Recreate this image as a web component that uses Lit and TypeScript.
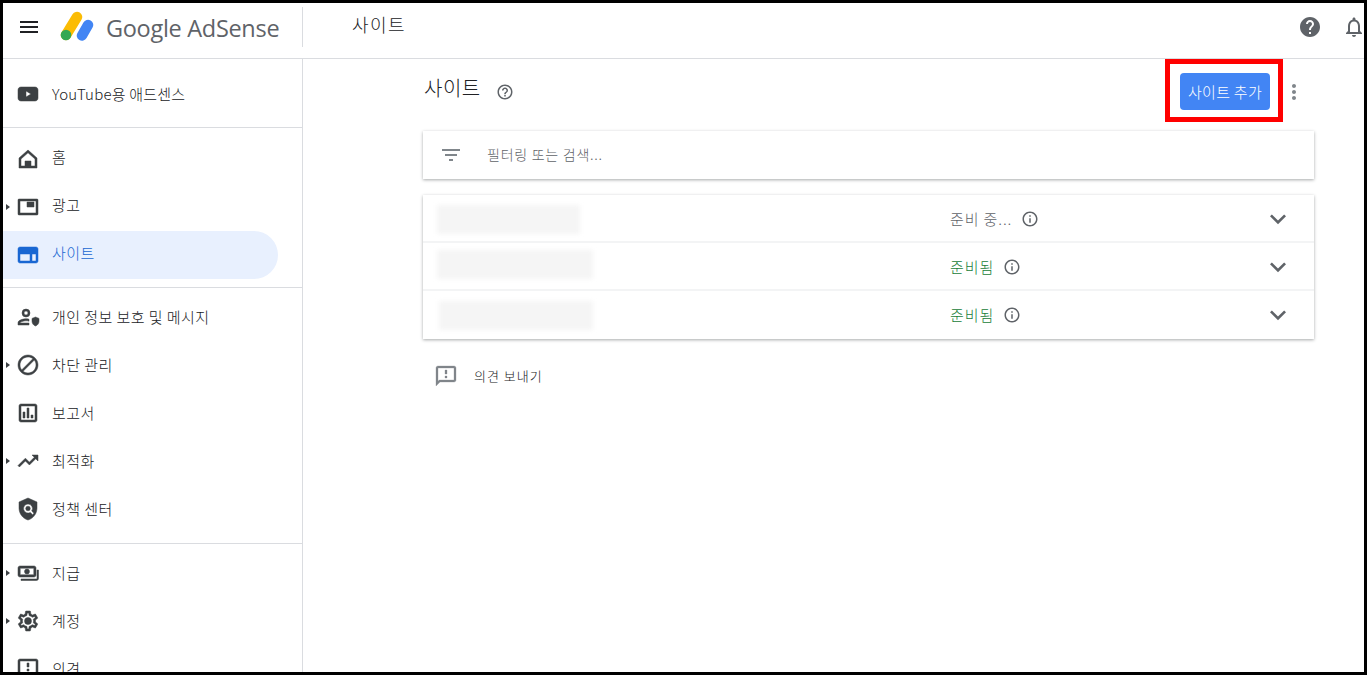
import { css, html, LitElement } from 'lit';
import { customElement } from 'lit/decorators.js';

const ICONS = {
  menu: 'M3 18h18v-2H3v2zm0-5h18v-2H3v2zm0-7v2h18V6H3z',
  help: 'M12 2C6.48 2 2 6.48 2 12s4.48 10 10 10 10-4.48 10-10S17.52 2 12 2zm1 17h-2v-2h2v2zm2.07-7.75l-.9.92C13.45 12.9 13 13.5 13 15h-2v-.5c0-1.1.45-2.1 1.17-2.83l1.24-1.26c.37-.36.59-.86.59-1.41 0-1.1-.9-2-2-2s-2 .9-2 2H8c0-2.21 1.79-4 4-4s4 1.79 4 4c0 .88-.36 1.68-.93 2.25z',
  helpOutline: 'M11 18h2v-2h-2v2zm1-16C6.48 2 2 6.48 2 12s4.48 10 10 10 10-4.48 10-10S17.52 2 12 2zm0 18c-4.41 0-8-3.59-8-8s3.59-8 8-8 8 3.59 8 8-3.59 8-8 8zm0-14c-2.21 0-4 1.79-4 4h2c0-1.1.9-2 2-2s2 .9 2 2c0 2-3 1.75-3 5h2c0-2.25 3-2.5 3-5 0-2.21-1.79-4-4-4z',
  bell: 'M12 22c1.1 0 2-.9 2-2h-4c0 1.1.9 2 2 2zm6-6v-5c0-3.07-1.63-5.64-4.5-6.32V4c0-.83-.67-1.5-1.5-1.5s-1.5.67-1.5 1.5v.68C7.64 5.36 6 7.92 6 11v5l-2 2v1h16v-1l-2-2zm-2 1H8v-6c0-2.48 1.51-4.5 4-4.5s4 2.02 4 4.5v6z',
  youtube: 'M5 5h14c1.7 0 3 1.3 3 3v8c0 1.7-1.3 3-3 3H5c-1.7 0-3-1.3-3-3V8c0-1.7 1.3-3 3-3zm5 4v6l5-3-5-3z',
  home: 'M12 3L3 11v10h18V11l-9-8zm0 2.8l7 6.2v7h-4v-5H9v5H5v-7l7-6.2z',
  ads: 'M21 4H3c-.6 0-1 .4-1 1v14c0 .6.4 1 1 1h18c.6 0 1-.4 1-1V5c0-.6-.4-1-1-1zm-1 14H4V6h16v12zM11 7h7v5h-7z',
  sites: 'M20 4H4c-1.1 0-2 .9-2 2v12c0 1.1.9 2 2 2h16c1.1 0 2-.9 2-2V6c0-1.1-.9-2-2-2zM4 11h10v7H4v-7zm12 0h4v7h-4v-7z',
  privacy: 'M10 4a4 4 0 1 1 0 8 4 4 0 0 1 0-8zm0 2a2 2 0 1 0 0 4 2 2 0 0 0 0-4zM2 20v-2.2c0-2.6 5.2-4 8-4 1 0 2 .1 3 .4v2c-1-.3-2-.4-3-.4-2.6 0-5.7 1.2-6 2.2h9v2H2zm17.5-8l3.5 1.4v2.8c0 2.2-1.5 4.2-3.5 4.8-2-.6-3.5-2.6-3.5-4.8v-2.8l3.5-1.4z',
  block: 'M12 2C6.48 2 2 6.48 2 12s4.48 10 10 10 10-4.48 10-10S17.52 2 12 2zM4 12c0-4.42 3.58-8 8-8 1.85 0 3.55.63 4.9 1.69L5.69 16.9C4.63 15.55 4 13.85 4 12zm8 8c-1.85 0-3.55-.63-4.9-1.69L18.31 7.1C19.37 8.45 20 10.15 20 12c0 4.42-3.58 8-8 8z',
  reports: 'M19 3H5c-1.1 0-2 .9-2 2v14c0 1.1.9 2 2 2h14c1.1 0 2-.9 2-2V5c0-1.1-.9-2-2-2zm0 16H5V5h14v14zM7 11h2v6H7zm4-4h2v10h-2zm4 7h2v3h-2z',
  trending: 'M16 6l2.29 2.29-4.88 4.88-4-4L2 16.59 3.41 18l6-6 4 4 6.3-6.29L22 12V6z',
  policy: 'M12 1L3 5v6c0 5.55 3.84 10.74 9 12 5.16-1.26 9-6.45 9-12V5l-9-4zm0 6a4.5 4.5 0 0 1 3.7 7l2.3 2.3-1.4 1.4-2.3-2.3A4.5 4.5 0 1 1 12 7zm0 2.2a2.3 2.3 0 1 0 0 4.6 2.3 2.3 0 0 0 0-4.6z',
  payments: 'M4 5h14c1.1 0 2 .9 2 2v7c0 1.1-.9 2-2 2H4c-1.1 0-2-.9-2-2V7c0-1.1.9-2 2-2zm.3 2.2c-.1 0-.1 0-.1.1v6.4c0 .1 0 .1.1.1h13.4c.1 0 .1 0 .1-.1V7.300c0-.1 0-.1-.1-.1H4.300zM11 8a2.500 2.500 0 1 1 0 5 2.500 2.500 0 0 1 0-5zM22.500 9v8.500c0 1.100-.9 2-2 2H5V18h16V9h1.500z',
  settings: 'M19.43 12.98c.04-.32.07-.64.07-.98s-.03-.66-.07-.98l2.11-1.65c.19-.15.24-.42.12-.64l-2-3.46c-.12-.22-.39-.3-.61-.22l-2.49 1c-.52-.4-1.08-.73-1.69-.98l-.38-2.65C14.46 2.18 14.25 2 14 2h-4c-.25 0-.46.18-.49.42l-.38 2.65c-.61.25-1.17.59-1.69.98l-2.49-1c-.23-.09-.49 0-.61.22l-2 3.46c-.13.22-.07.49.12.64l2.11 1.65c-.04.32-.07.65-.07.98s.03.66.07.98l-2.11 1.65c-.19.15-.24.42-.12.64l2 3.46c.12.22.39.3.61.22l2.49-1c.52.4 1.08.73 1.69.98l.38 2.65c.03.24.24.42.49.42h4c.25 0 .46-.18.49-.42l.38-2.65c.61-.25 1.17-.59 1.69-.98l2.49 1c.23.09.49 0 .61-.22l2-3.46c.12-.22.07-.49-.12-.64l-2.11-1.65zm-1.98-1.71c.04.31.05.52.05.73 0 .21-.02.43-.05.73l-.14 1.13.89.7 1.08.84-.7 1.21-1.27-.51-1.04-.42-.9.68c-.43.32-.84.56-1.25.73l-1.06.43-.16 1.13-.2 1.35h-1.4l-.19-1.35-.16-1.13-1.06-.43c-.43-.18-.83-.41-1.23-.71l-.91-.7-1.06.43-1.27.51-.7-1.21 1.08-.84.89-.7-.14-1.13c-.03-.31-.05-.54-.05-.74s.02-.43.05-.73l.14-1.13-.89-.7-1.08-.84.7-1.21 1.27.51 1.04.42.9-.68c.43-.32.84-.56 1.25-.73l1.06-.43.16-1.13.2-1.35h1.39l.19 1.35.16 1.13 1.06.43c.43.18.83.41 1.23.71l.91.7 1.06-.43 1.27-.51.7 1.21-1.07.85-.89.7.14 1.13zM12 8.500a3.500 3.500 0 1 0 0 7 3.500 3.500 0 0 0 0-7z',
  feedback: 'M20 2H4c-1.1 0-1.99.9-1.99 2L2 22l4-4h14c1.1 0 2-.9 2-2V4c0-1.1-.9-2-2-2zm0 14H5.17L4 17.17V4h16v12zM11 12h2v2h-2zm0-6h2v4h-2z',
  info: 'M11 7h2v2h-2zm0 4h2v6h-2zm1-9C6.48 2 2 6.48 2 12s4.48 10 10 10 10-4.48 10-10S17.52 2 12 2zm0 18c-4.41 0-8-3.59-8-8s3.59-8 8-8 8 3.59 8 8-3.59 8-8 8z',
  filter: 'M10 18h4v-2h-4v2zM3 6v2h18V6H3zm3 7h12v-2H6v2z',
  chevron: 'M7.41 8.59 12 13.17l4.59-4.58L18 10l-6 6-6-6z',
  more: 'M12 8c1.1 0 2-.9 2-2s-.9-2-2-2-2 .9-2 2 .9 2 2 2zm0 2c-1.1 0-2 .9-2 2s.9 2 2 2 2-.9 2-2-.9-2-2-2zm0 6c-1.1 0-2 .9-2 2s.9 2 2 2 2-.9 2-2-.9-2-2-2z',
};

type NavItem = { icon: keyof typeof ICONS; label: string; caret?: boolean; active?: boolean; latin?: boolean };

const NAV_GROUPS: { cls: string; items: NavItem[] }[] = [
  { cls: 'nav__group--top', items: [{ icon: 'youtube', label: 'YouTube용 애드센스', latin: true }] },
  {
    cls: 'nav__group--mid',
    items: [
      { icon: 'home', label: '홈' },
      { icon: 'ads', label: '광고', caret: true },
      { icon: 'sites', label: '사이트', active: true },
    ],
  },
  {
    cls: 'nav__group--low',
    items: [
      { icon: 'privacy', label: '개인 정보 보호 및 메시지' },
      { icon: 'block', label: '차단 관리', caret: true },
      { icon: 'reports', label: '보고서' },
      { icon: 'trending', label: '최적화', caret: true },
      { icon: 'policy', label: '정책 센터' },
    ],
  },
  {
    cls: 'nav__group--end',
    items: [
      { icon: 'payments', label: '지급', caret: true },
      { icon: 'settings', label: '계정', caret: true },
      { icon: 'feedback', label: '의견' },
    ],
  },
];

const SITES = [
  { blurLeft: 14, blurWidth: 143, blurShift: 0, status: '준비 중...', ready: false },
  { blurLeft: 14, blurWidth: 156, blurShift: -5, status: '준비됨', ready: true },
  { blurLeft: 16, blurWidth: 154, blurShift: 0, status: '준비됨', ready: true },
];

function icon(name: keyof typeof ICONS, cls = '') {
  return html`<svg class="icon ${cls}" viewBox="0 0 24 24" aria-hidden="true">
    <path fill-rule="evenodd" d="${ICONS[name]}"></path>
  </svg>`;
}

@customElement('app-root')
export class AppRoot extends LitElement {
  private renderNavItem(item: NavItem) {
    return html`<li class="nav__item ${item.active ? 'nav__item--active' : ''}">
      <span class="nav__caret ${item.caret ? 'nav__caret--on' : ''}"></span>
      ${icon(item.icon, 'nav__icon')}
      <span class="nav__label ${item.latin ? 'nav__label--latin' : ''}">${item.label}</span>
    </li>`;
  }

  render() {
    return html`<div class="frame">
      <header class="topbar">
        <div class="brand">
          ${icon('menu', 'brand__menu')}
          <svg class="brand__logo" viewBox="0 0 34 30" aria-hidden="true">
            <line x1="6" y1="24" x2="17" y2="6" stroke="#fbbc04" stroke-width="10.5" stroke-linecap="round"></line>
            <line x1="22" y1="24.5" x2="28" y2="14" stroke="#4285f4" stroke-width="10.5" stroke-linecap="round"></line>
            <circle cx="6" cy="24" r="5.3" fill="#34a853"></circle>
          </svg>
          <span class="brand__name">Google AdSense</span>
        </div>
        <div class="topbar__title">사이트</div>
        <div class="topbar__actions">
          ${icon('help', 'topbar__help')} ${icon('bell', 'topbar__bell')}
        </div>
      </header>

      <div class="body">
        <nav class="nav">
          ${NAV_GROUPS.map(
            (group) =>
              html`<ul class="nav__group ${group.cls}">
                ${group.items.map((item) => this.renderNavItem(item))}
              </ul>`
          )}
        </nav>

        <main class="main">
          <div class="head">
            <h1 class="head__title">사이트</h1>
            ${icon('helpOutline', 'head__help')}
            <div class="head__actions">
              <div class="callout"><button class="add-btn">사이트 추가</button></div>
              ${icon('more', 'head__more')}
            </div>
          </div>

          <div class="card filter">
            ${icon('filter', 'filter__icon')}
            <span class="filter__text">필터링 또는 검색...</span>
          </div>

          <ul class="card sites">
            ${SITES.map(
              (site) => html`<li class="site">
                <div class="site__name">
                  <span
                    class="site__blur"
                    style="margin-left: ${site.blurLeft}px; margin-top: ${site.blurShift}px; width: ${site.blurWidth}px"
                  ></span>
                </div>
                <div class="site__status ${site.ready ? 'site__status--ready' : ''}">
                  <span class="site__status-text">${site.status}</span>
                  ${icon('info', 'site__info')}
                </div>
                ${icon('chevron', 'site__chevron')}
              </li>`
            )}
          </ul>

          <div class="feedback">
            ${icon('feedback', 'feedback__icon')}
            <span class="feedback__text">의견 보내기</span>
          </div>
        </main>
      </div>
    </div>`;
  }

  static styles = css`
    :host {
      display: block;
      width: 1367px;
      height: 675px;
      font-family: 'Noto Sans CJK KR', Roboto, sans-serif;
      font-weight: 300;
      color: #202124;
    }

    * {
      box-sizing: border-box;
    }

    ul {
      list-style: none;
      margin: 0;
      padding: 0;
    }

    .frame {
      width: 100%;
      height: 100%;
      border: 3px solid #000;
      background: #fff;
      display: flex;
      flex-direction: column;
      overflow: hidden;
    }

    .icon {
      display: block;
      width: 24px;
      height: 24px;
      flex: none;
      fill: currentColor;
    }

    .topbar {
      height: 56px;
      flex: none;
      display: flex;
      border-bottom: 1px solid #dadce0;
    }

    .brand {
      width: 300px;
      height: 40px;
      margin-top: 4px;
      flex: none;
      display: flex;
      align-items: center;
      padding-left: 14px;
      border-right: 1px solid #dadce0;
    }

    .brand__menu {
      color: #202124;
    }

    .brand__logo {
      width: 34px;
      height: 30px;
      margin-left: 19px;
      margin-bottom: 3px;
      flex: none;
    }

    .brand__name {
      margin-left: 12px;
      padding-top: 2px;
      font-family: 'Open Sans', sans-serif;
      font-weight: 400;
      font-size: 23.5px;
      letter-spacing: -0.3px;
      color: #5f6368;
    }

    .topbar__title {
      margin-left: 49px;
      margin-top: 7px;
      font-size: 18px;
      letter-spacing: 1.4px;
      line-height: 28px;
    }

    .topbar__actions {
      margin-left: auto;
      display: flex;
      gap: 20px;
      padding-top: 12px;
      margin-right: -2px;
      color: #5f6368;
    }

    .body {
      flex: 1;
      min-height: 0;
      display: flex;
    }

    .nav {
      width: 299px;
      flex: none;
      overflow: hidden;
    }

    .nav__group {
      border-bottom: 1px solid #dadce0;
    }

    .nav__group--top {
      padding: 11px 0 9px;
    }

    .nav__group--mid {
      padding: 7px 0 8px;
    }

    .nav__group--low {
      padding: 5px 0 10px;
    }

    .nav__group--end {
      padding-top: 5px;
      border-bottom: none;
    }

    .nav__item {
      width: 275px;
      height: 48px;
      display: flex;
      align-items: center;
      padding-left: 2px;
      color: #3c4043;
      border-radius: 0 24px 24px 0;
    }

    .nav__item--active {
      background: #e8f0fe;
      color: #1967d2;
    }

    .nav__caret {
      width: 11px;
      flex: none;
    }

    .nav__caret--on::before {
      content: '';
      display: block;
      width: 0;
      height: 0;
      margin-left: 1px;
      border-left: 4px solid #3c4043;
      border-top: 3.5px solid transparent;
      border-bottom: 3.5px solid transparent;
    }

    .nav__icon {
      stroke: currentColor;
      stroke-width: 0.5;
    }

    .nav__label {
      margin-left: 12px;
      font-size: 15px;
      letter-spacing: 0.45px;
      color: #202124;
      position: relative;
      top: -1px;
    }

    .nav__item--active .nav__label {
      color: #1967d2;
    }

    .nav__label--latin {
      letter-spacing: 0.2px;
    }

    .nav__group--mid .nav__label {
      top: -3px;
    }

    .main {
      flex: 1;
      min-width: 0;
      border-left: 1px solid #dadce0;
      padding: 14px 50px 0 120px;
    }

    .head {
      height: 37px;
      display: flex;
      align-items: center;
    }

    .head__title {
      margin: 0 0 0 1px;
      font-size: 20px;
      letter-spacing: 0.5px;
      font-weight: 300;
      line-height: 28px;
      position: relative;
      top: -4px;
    }

    .head__help {
      width: 18px;
      height: 18px;
      margin-left: 15px;
      color: #5f6368;
    }

    .head__actions {
      margin-left: auto;
      margin-right: 8px;
      display: flex;
      align-items: center;
      gap: 12px;
    }

    .callout {
      position: relative;
      display: flex;
    }

    .callout::after {
      content: '';
      position: absolute;
      inset: -14px -13px -12px -15px;
      border: 5px solid #f00;
      pointer-events: none;
    }

    .add-btn {
      width: 90px;
      height: 37px;
      border: none;
      border-radius: 4px;
      background: #4285f4;
      color: #fff;
      font: inherit;
      font-size: 15px;
      letter-spacing: 0.3px;
      padding: 0;
    }

    .head__more {
      color: #80868b;
    }

    .card {
      background: #fff;
      box-shadow: 0 1px 3px rgba(60, 64, 67, 0.45);
    }

    .filter {
      height: 48px;
      margin-top: 21px;
      display: flex;
      align-items: center;
      padding-left: 16px;
    }

    .filter__icon {
      color: #80868b;
    }

    .filter__text {
      margin-left: 24px;
      font-size: 14px;
      letter-spacing: 0.75px;
      color: #5f6368;
      position: relative;
      top: -1px;
    }

    .sites {
      margin-top: 16px;
    }

    .site {
      height: 48px;
      display: flex;
      align-items: center;
      padding-right: 20px;
      box-shadow: inset 0 -2px 0 #f3f4f5;
    }

    .site:last-child {
      box-shadow: none;
    }

    .site__name {
      width: 527px;
      flex: none;
    }

    .site__blur {
      display: block;
      height: 29px;
      background: #f5f5f5;
      filter: blur(2px);
    }

    .site__status {
      display: flex;
      align-items: center;
      gap: 9px;
      font-size: 15px;
      letter-spacing: 0.9px;
      color: #5f6368;
    }

    .site__status-text {
      position: relative;
      top: -1px;
    }

    .site__status--ready {
      color: #188038;
    }

    .site__info {
      width: 18px;
      height: 18px;
      color: #5f6368;
    }

    .site__chevron {
      width: 32px;
      height: 32px;
      margin-left: auto;
      color: #5f6368;
    }

    .feedback {
      height: 48px;
      margin-top: 13px;
      display: flex;
      align-items: center;
      padding-left: 11px;
    }

    .feedback__icon {
      color: #80868b;
      stroke: currentColor;
      stroke-width: 0.3;
    }

    .feedback__text {
      margin-left: 16px;
      font-size: 13px;
      letter-spacing: 1px;
      color: #202124;
      position: relative;
      top: -1px;
    }
  `;
}
